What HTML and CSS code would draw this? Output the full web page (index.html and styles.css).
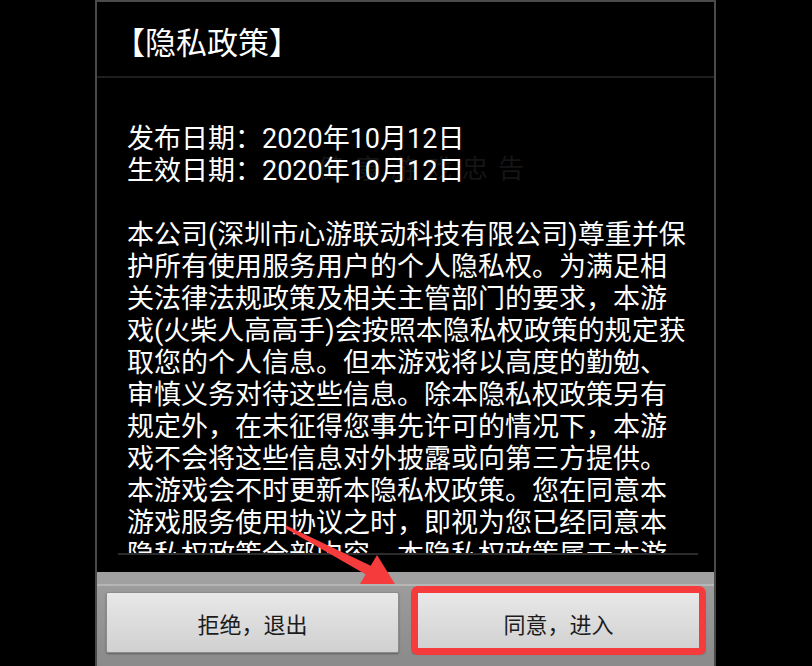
FILE: index.html
```
<!DOCTYPE html>
<html lang="zh-CN">
<head>
  <meta charset="UTF-8" />
  <meta name="viewport" content="width=device-width, initial-scale=1" />
  <title>隐私政策</title>
  <link rel="stylesheet" href="styles.css">
</head>
<body>
  <div class="dialog">
    <div class="dialog-title">【隐私政策】</div>

    <div class="dialog-body">
      <div class="watermark">健康游戏忠告</div>
      <div class="policy-text">
        <p>发布日期：2020年10月12日<br>生效日期：2020年10月12日</p>
        <p>本公司(深圳市心游联动科技有限公司)尊重并保护所有使用服务用户的个人隐私权。为满足相关法律法规政策及相关主管部门的要求，本游戏(火柴人高高手)会按照本隐私权政策的规定获取您的个人信息。但本游戏将以高度的勤勉、审慎义务对待这些信息。除本隐私权政策另有规定外，在未征得您事先许可的情况下，本游戏不会将这些信息对外披露或向第三方提供。本游戏会不时更新本隐私权政策。您在同意本游戏服务使用协议之时，即视为您已经同意本隐私权政策全部内容。本隐私权政策属于本游戏服务使用协议不可分割的一部分。</p>
      </div>
    </div>

    <div class="dialog-actions">
      <button class="btn">拒绝，退出</button>
      <button class="btn">同意，进入</button>
      <div class="highlight"></div>
    </div>
  </div>

  <svg class="arrow" width="120" height="70" viewBox="0 0 120 70">
    <polygon points="5.3,8.3 6.7,5.7 92.4,46.4 87.6,55.6" fill="#f53b3b" />
    <polygon points="97,35 80,64 115,64" fill="#f53b3b" />
  </svg>
</body>
</html>
```

FILE: styles.css
```
body {
  margin: 0;
  width: 812px;
  height: 666px;
  overflow: hidden;
  background: #000;
  font-family: Roboto, "Noto Sans CJK SC", sans-serif;
  position: relative;
}
.dialog {
  margin-left: 95px;
  width: 621px;
  height: 666px;
  box-sizing: border-box;
  border: 2px solid #4a4a4a;
  border-bottom: none;
  display: flex;
  flex-direction: column;
}
.dialog-title {
  height: 76px;
  box-sizing: border-box;
  border-bottom: 2px solid #1e1e1e;
  padding: 22px 0 0 17px;
  color: #fff;
  font-size: 31px;
  line-height: 40px;
}
.dialog-body {
  flex: 1;
  position: relative;
  overflow: hidden;
  margin: 0 16px 17px 21px;
  border-bottom: 2px solid #2c2c2c;
}
.watermark {
  position: absolute;
  left: 36px;
  right: 0;
  top: 74px;
  text-align: center;
  color: #151515;
  font-size: 26px;
  line-height: 34px;
  letter-spacing: 10px;
}
.policy-text {
  position: relative;
  padding: 45px 0 0 9px;
  width: 563px;
  color: #fff;
  font-size: 27px;
  line-height: 32px;
}
.policy-text p {
  margin: 0 0 32px;
}
.dialog-actions {
  height: 94px;
  box-sizing: border-box;
  position: relative;
  display: flex;
  gap: 13px;
  padding: 20px 9px 13px;
  background: linear-gradient(#a0a0a0 0, #a0a0a0 12px, #b6b6b6 12px, #b6b6b6 14px, #9c9c9c 14px, #8a8a8a 100%);
}
.btn {
  flex: 1;
  border: 1px solid #8c8c8c;
  border-radius: 2px;
  background: linear-gradient(#e8e8e8, #d0d0d0);
  box-shadow: 0 1px 2px rgba(0,0,0,0.35);
  font-family: Roboto, "Noto Sans CJK SC", sans-serif;
  font-size: 22px;
  color: #1c1c1c;
  padding: 0;
}
.highlight {
  position: absolute;
  left: 314px;
  top: 14px;
  width: 295px;
  height: 69px;
  box-sizing: border-box;
  border: 7px solid #f53b3b;
  border-radius: 7px;
}
.arrow {
  position: absolute;
  left: 280px;
  top: 520px;
}
```
